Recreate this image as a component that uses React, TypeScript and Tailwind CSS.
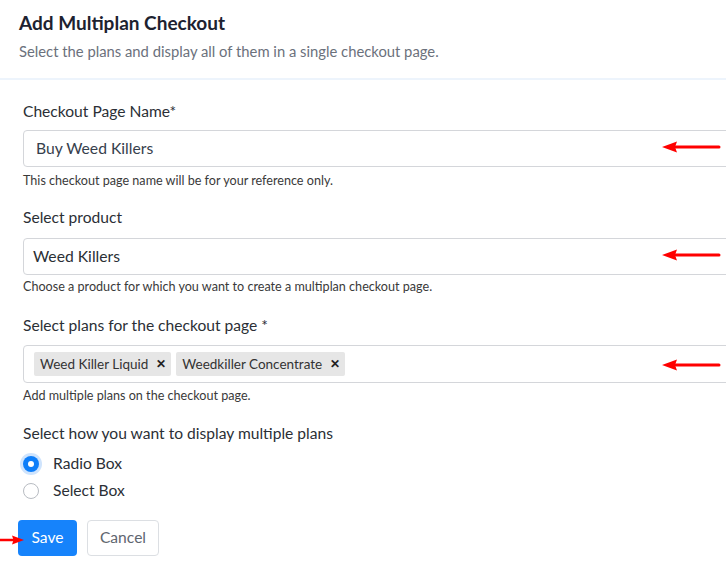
import { useState } from 'react';

function Arrow({ className }: { className: string }) {
  return (
    <svg className={className} width="60" height="14" viewBox="0 0 60 14" fill="none">
      <line x1="14" y1="7" x2="58" y2="7" stroke="#ff0000" strokeWidth="3" strokeLinecap="round" />
      <path d="M1 7 L16 1.5 L14 7 L16 12.5 Z" fill="#ff0000" />
    </svg>
  );
}

function Label({ children, className = '' }: { children: React.ReactNode; className?: string }) {
  return <div className={`text-[15.6px] leading-[22px] text-[#2b2f36] ${className}`}>{children}</div>;
}

function Help({ children, className = '' }: { children: React.ReactNode; className?: string }) {
  return <div className={`text-[12.6px] leading-4 text-[#3a3a3a] ${className}`}>{children}</div>;
}

function Chip({ label }: { label: string }) {
  return (
    <span className="flex h-6 items-center gap-[8px] rounded-[2px] bg-[#e6e6e6] pl-[6px] pr-[5px] text-[13.5px] text-[#333]">
      {label}
      <span className="text-[12px] font-bold text-[#222]">✕</span>
    </span>
  );
}

export default function App() {
  const [mode, setMode] = useState('radio');

  return (
    <div className="relative h-[574px] w-[726px] overflow-hidden bg-white" style={{ fontFamily: 'Lato, "Noto Sans", sans-serif' }}>
      <div className="px-[19px] pt-[11px] pb-[17px]">
        <h1 className="text-[19px] leading-6 font-bold text-[#1d2230]">Add Multiplan Checkout</h1>
        <p className="mt-[6px] text-[14.8px] leading-5 text-[#6b717c]">
          Select the plans and display all of them in a single checkout page.
        </p>
      </div>
      <div className="h-[2px] bg-[#edf4fc]" />

      <div className="pl-[23px] pt-[20px]">
        <Label>Checkout Page Name*</Label>
        <div className="relative mt-[8px] mr-[-12px] flex h-[37px] items-center rounded-[4px] border border-[#d4d6da] pl-[12px] text-[15.7px] text-[#36404c]">
          Buy Weed Killers
          <Arrow className="absolute left-[637px] top-[9px]" />
        </div>
        <Help className="mt-[6px]">This checkout page name will be for your reference only.</Help>

        <Label className="mt-[17px]">Select product</Label>
        <div className="relative mt-[10px] mr-[-12px] flex h-[37px] items-center rounded-[4px] border border-[#d4d6da] pl-[9px] text-[15.7px] text-[#2b2f36]">
          Weed Killers
          <Arrow className="absolute left-[637px] top-[9px]" />
        </div>
        <Help className="mt-[4px]">Choose a product for which you want to create a multiplan checkout page.</Help>

        <Label className="mt-[19px]">Select plans for the checkout page *</Label>
        <div className="relative mt-[9px] mr-[-12px] flex h-[38px] items-center gap-[5px] rounded-[4px] border border-[#d4d6da] pl-[10px]">
          <Chip label="Weed Killer Liquid" />
          <Chip label="Weedkiller Concentrate" />
          <Arrow className="absolute left-[637px] top-[12px]" />
        </div>
        <Help className="mt-[5px]">Add multiple plans on the checkout page.</Help>

        <Label className="mt-[18px]">Select how you want to display multiple plans</Label>
        <div className="mt-[9px] flex flex-col gap-[5px]">
          {[
            { id: 'radio', label: 'Radio Box' },
            { id: 'select', label: 'Select Box' },
          ].map((o) => (
            <button key={o.id} type="button" onClick={() => setMode(o.id)} className="flex h-[22px] items-center gap-[14px] text-[15.6px] text-[#2b2f36]">
              {mode === o.id ? (
                <span className="flex h-4 w-4 items-center justify-center rounded-full bg-[#0d7ef9] shadow-[0_0_0_3px_#cfe4fd]">
                  <span className="h-[6px] w-[6px] rounded-full bg-white" />
                </span>
              ) : (
                <span className="h-4 w-4 rounded-full border border-[#b8bcc2] bg-white" />
              )}
              {o.label}
            </button>
          ))}
        </div>
      </div>

      <div className="relative mt-[18px] flex gap-[10px] pl-[18px]">
        <button type="button" className="h-9 w-[59px] rounded-[4px] bg-[#1683fb] text-[15.6px] text-white">
          Save
        </button>
        <button type="button" className="h-9 w-[72px] rounded-[4px] border border-[#dcdfe3] bg-white text-[15.6px] text-[#5f6670]">
          Cancel
        </button>
        <svg className="absolute left-0 top-[14px]" width="26" height="12" viewBox="0 0 26 12" fill="none">
          <line x1="0" y1="6" x2="14" y2="6" stroke="#ff0000" strokeWidth="2.5" />
          <path d="M24 6 L12 1.5 L13.5 6 L12 10.5 Z" fill="#ff0000" />
        </svg>
      </div>
    </div>
  );
}
